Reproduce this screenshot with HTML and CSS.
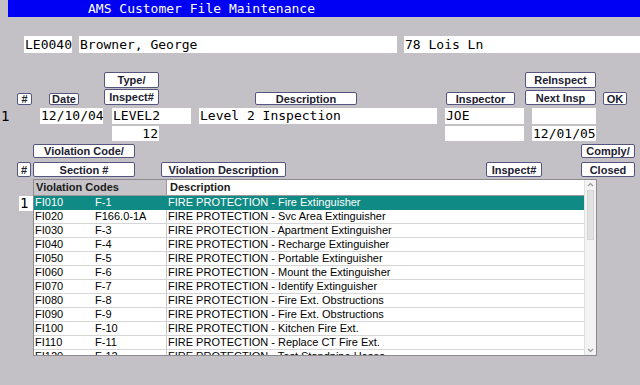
FILE: index.html
```html
<!DOCTYPE html>
<html>
<head>
<meta charset="utf-8">
<link rel="stylesheet" href="styles.css">
</head>
<body>
<div class="screen">
  <div class="titlebar">AMS Customer File Maintenance</div>

  <div class="row r-cust">
    <div class="fld f-id">LE0040</div>
    <div class="fld f-name">Browner, George</div>
    <div class="fld f-addr">78 Lois Ln</div>
  </div>

  <div class="row r-btn-top">
    <div class="btn b-type">Type/</div>
    <div class="btn b-reinsp">ReInspect</div>
  </div>

  <div class="row r-btn-bot">
    <div class="btn b-num">#</div>
    <div class="btn b-date">Date</div>
    <div class="btn b-insp">Inspect#</div>
    <div class="btn b-desc">Description</div>
    <div class="btn b-inspector">Inspector</div>
    <div class="btn b-next">Next Insp</div>
    <div class="btn b-ok">OK</div>
  </div>

  <div class="row r-data1">
    <div class="lbl l-one">1</div>
    <div class="fld d-date">12/10/04</div>
    <div class="fld d-type">LEVEL2</div>
    <div class="fld d-desc">Level 2 Inspection</div>
    <div class="fld d-insp">JOE</div>
    <div class="fld d-next"></div>
  </div>

  <div class="row r-data2">
    <div class="fld d-num">12</div>
    <div class="fld d-insp2"></div>
    <div class="fld d-next2">12/01/05</div>
  </div>

  <div class="row r-vbtn-top">
    <div class="btn b-vcode">Violation Code/</div>
    <div class="btn b-comply">Comply/</div>
  </div>

  <div class="row r-vbtn-bot">
    <div class="btn b-vnum">#</div>
    <div class="btn b-sect">Section #</div>
    <div class="btn b-vdesc">Violation Description</div>
    <div class="btn b-vinsp">Inspect#</div>
    <div class="btn b-closed">Closed</div>
  </div>

  <div class="row r-grid">
    <div class="fld g-one">1</div>
    <div class="grid">
      <div class="grid-body">
        <div class="g-head">
          <div class="gh-codes">Violation Codes</div>
          <div class="gh-desc">Description</div>
        </div>
        <div class="g-row sel"><span class="c-code">FI010</span><span class="c-sect">F-1</span><span class="c-desc">FIRE PROTECTION - Fire Extinguisher</span></div>
        <div class="g-row"><span class="c-code">FI020</span><span class="c-sect">F166.0-1A</span><span class="c-desc">FIRE PROTECTION - Svc Area Extinguisher</span></div>
        <div class="g-row"><span class="c-code">FI030</span><span class="c-sect">F-3</span><span class="c-desc">FIRE PROTECTION - Apartment Extinguisher</span></div>
        <div class="g-row"><span class="c-code">FI040</span><span class="c-sect">F-4</span><span class="c-desc">FIRE PROTECTION - Recharge Extinguisher</span></div>
        <div class="g-row"><span class="c-code">FI050</span><span class="c-sect">F-5</span><span class="c-desc">FIRE PROTECTION - Portable Extinguisher</span></div>
        <div class="g-row"><span class="c-code">FI060</span><span class="c-sect">F-6</span><span class="c-desc">FIRE PROTECTION - Mount the Extinguisher</span></div>
        <div class="g-row"><span class="c-code">FI070</span><span class="c-sect">F-7</span><span class="c-desc">FIRE PROTECTION - Identify Extinguisher</span></div>
        <div class="g-row"><span class="c-code">FI080</span><span class="c-sect">F-8</span><span class="c-desc">FIRE PROTECTION - Fire Ext. Obstructions</span></div>
        <div class="g-row"><span class="c-code">FI090</span><span class="c-sect">F-9</span><span class="c-desc">FIRE PROTECTION - Fire Ext. Obstructions</span></div>
        <div class="g-row"><span class="c-code">FI100</span><span class="c-sect">F-10</span><span class="c-desc">FIRE PROTECTION - Kitchen Fire Ext.</span></div>
        <div class="g-row"><span class="c-code">FI110</span><span class="c-sect">F-11</span><span class="c-desc">FIRE PROTECTION - Replace CT Fire Ext.</span></div>
        <div class="g-row"><span class="c-code">FI120</span><span class="c-sect">F-12</span><span class="c-desc">FIRE PROTECTION - Test Standpipe Hoses</span></div>
      </div>
      <div class="scroll">
        <svg class="arr" width="11" height="10" viewBox="0 0 11 10"><path d="M3 6 L5.5 3.5 L8 6" fill="none" stroke="#9a9a9a" stroke-width="1.2"/></svg>
        <div class="thumb"></div>
        <div class="track"></div>
        <svg class="arr" width="11" height="10" viewBox="0 0 11 10"><path d="M3 4 L5.5 6.5 L8 4" fill="none" stroke="#9a9a9a" stroke-width="1.2"/></svg>
      </div>
    </div>
  </div>
</div>
</body>
</html>
```

FILE: styles.css
```css
html, body {
  margin: 0;
  padding: 0;
  background: #c3c1c5;
}
.screen {
  width: 640px;
  height: 385px;
  overflow: hidden;
  background: #c3c1c5;
}
.titlebar {
  margin-left: 8px;
  height: 17px;
  background: #0000f4;
  color: #ffffff;
  font: 13px/17px "DejaVu Sans Mono", monospace;
  padding-left: 80px;
  white-space: nowrap;
}
.row {
  display: flex;
  white-space: nowrap;
}
.fld {
  background: #ffffff;
  color: #000000;
  font: 13px/16px "DejaVu Sans Mono", monospace;
  padding-left: 1px;
  box-sizing: border-box;
  height: 16px;
  overflow: hidden;
}
.lbl {
  color: #000000;
  font: 14px/16px "DejaVu Sans Mono", monospace;
  height: 16px;
}
.btn {
  box-sizing: border-box;
  background: #ffffff;
  border: 1px solid #55557f;
  border-radius: 2px;
  font: bold 11px "Liberation Sans", Arial, sans-serif;
  color: #202030;
  display: flex;
  align-items: center;
  justify-content: center;
  overflow: hidden;
}

/* customer row */
.r-cust { margin-top: 19px; height: 17px; }
.r-cust .fld { height: 17px; line-height: 17px; }
.f-id { margin-left: 24px; width: 48px; }
.f-name { margin-left: 7px; width: 318px; }
.f-addr { margin-left: 7px; width: 236px; }

/* inspection header buttons */
.r-btn-top { margin-top: 19px; height: 16px; }
.b-type { margin-left: 104px; width: 55px; height: 16px; }
.b-reinsp { margin-left: 366px; width: 71px; height: 16px; }

.r-btn-bot { margin-top: 1px; height: 16px; align-items: flex-end; }
.b-num { margin-left: 17px; width: 15px; height: 12px; }
.b-date { margin-left: 17px; width: 30px; height: 12px; }
.b-insp { margin-left: 25px; width: 55px; height: 16px; }
.b-desc { margin-left: 96px; width: 102px; height: 13px; }
.b-inspector { margin-left: 89px; width: 69px; height: 13px; }
.b-next { margin-left: 10px; width: 71px; height: 15px; }
.b-ok { margin-left: 7px; width: 24px; height: 13px; }

/* inspection data */
.r-data1 { margin-top: 3px; height: 16px; }
.l-one { margin-left: 1px; width: 11px; }
.d-date { margin-left: 28px; width: 63px; }
.d-type { margin-left: 9px; width: 79px; }
.d-desc { margin-left: 8px; width: 238px; }
.d-insp { margin-left: 8px; width: 79px; }
.d-next { margin-left: 8px; width: 64px; }

.r-data2 { margin-top: 2px; height: 15px; }
.r-data2 .fld { height: 15px; line-height: 15px; }
.d-num { margin-left: 112px; width: 47px; text-align: right; padding-right: 1px; }
.d-insp2 { margin-left: 286px; width: 79px; }
.d-next2 { margin-left: 8px; width: 64px; }

/* violation header buttons */
.r-vbtn-top { margin-top: 3px; height: 14px; }
.b-vcode { margin-left: 33px; width: 102px; height: 14px; }
.b-comply { margin-left: 446px; width: 54px; height: 14px; }

.r-vbtn-bot { margin-top: 4px; height: 15px; }
.r-vbtn-bot .btn { height: 15px; }
.b-vnum { margin-left: 17px; width: 14px; }
.b-sect { margin-left: 2px; width: 102px; }
.b-vdesc { margin-left: 26px; width: 125px; }
.b-vinsp { margin-left: 200px; width: 56px; }
.b-closed { margin-left: 39px; width: 54px; }

/* grid */
.r-grid { margin-top: 2px; height: 177px; align-items: flex-start; }
.g-one {
  margin-left: 19px;
  margin-top: 17px;
  width: 14px;
  height: 15px;
  font-size: 14px;
  line-height: 15px;
  padding-left: 1px;
  overflow: visible;
}
.grid {
  width: 564px;
  height: 177px;
  box-sizing: border-box;
  border: 1px solid #8c8a8e;
  background: #ffffff;
  display: flex;
  overflow: hidden;
}
.grid-body {
  width: 551px;
  height: 175px;
  overflow: hidden;
  font: 11px "Liberation Sans", Arial, sans-serif;
  color: #000000;
}
.g-head {
  display: flex;
  height: 16px;
  box-sizing: border-box;
  border-bottom: 1px solid #9a989c;
  font-weight: bold;
  line-height: 15px;
  color: #1a1a1a;
}
.gh-codes {
  width: 132px;
  background: #c6c4c8;
  padding-left: 2px;
  box-sizing: border-box;
}
.gh-desc {
  flex: 1;
  background: #ffffff;
  border-left: 1px solid #9a989c;
  padding-left: 3px;
}
.g-row {
  display: flex;
  height: 14px;
  box-sizing: border-box;
  border-bottom: 1px solid #d6d6d6;
  line-height: 13px;
  white-space: nowrap;
}
.g-row.sel {
  background: #108a84;
  color: #ffffff;
  border-bottom-color: #108a84;
}
.c-code { width: 61px; padding-left: 1px; box-sizing: border-box; }
.c-sect { width: 71px; }
.c-desc {
  flex: 1;
  border-left: 1px solid #c8c8c8;
  padding-left: 1px;
}
.g-row.sel .c-desc { border-left-color: #108a84; }
.scroll {
  width: 11px;
  height: 175px;
  background: #f3f3f3;
  border-left: 1px solid #e0e0e0;
  display: flex;
  flex-direction: column;
}
.arr { display: block; flex: none; }
.thumb {
  margin: 0 2px;
  height: 48px;
  background: #e2e2e2;
  border: 1px solid #d4d4d4;
  flex: none;
}
.track { flex: 1; }
```
